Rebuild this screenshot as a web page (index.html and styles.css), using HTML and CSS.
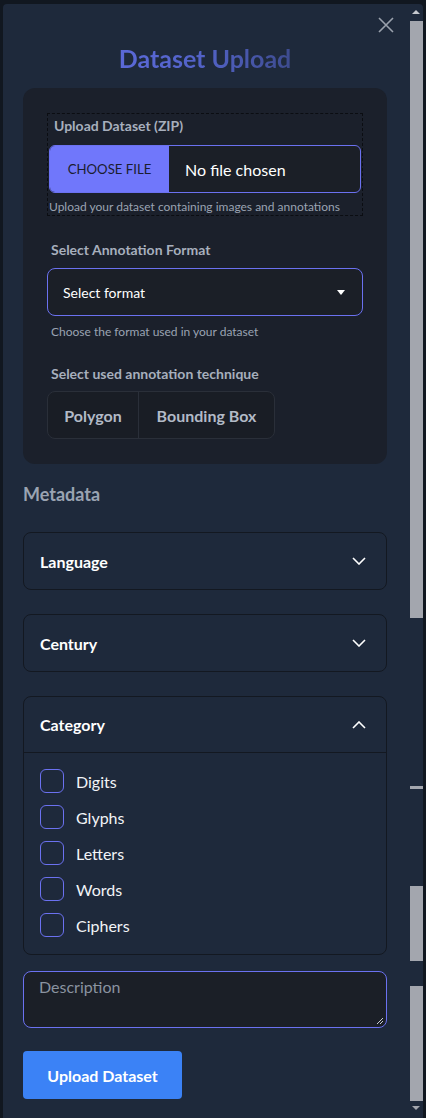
FILE: index.html
```html
<!DOCTYPE html>
<html>
<head>
<meta charset="utf-8">
<link rel="stylesheet" href="styles.css">
</head>
<body>
<div class="modal">
  <div class="content">
    <button class="close" aria-label="Close">
      <svg width="16" height="16" viewBox="0 0 16 16"><path d="M1 1 L15 15 M15 1 L1 15" stroke="#9aa1ad" stroke-width="1.6" fill="none"/></svg>
    </button>
    <h1 class="title">Dataset Upload</h1>
    <div class="card">
      <div class="dropzone">
        <div class="label label-zip">Upload Dataset (ZIP)</div>
        <div class="file">
          <span class="file-btn">CHOOSE FILE</span>
          <span class="file-name">No file chosen</span>
        </div>
        <div class="help help-zip">Upload your dataset containing images and annotations</div>
      </div>
      <div class="label label-format">Select Annotation Format</div>
      <div class="select">
        <span>Select format</span>
        <svg width="8" height="5" viewBox="0 0 8 5"><path d="M0 0 H8 L4 5 Z" fill="#ffffff"/></svg>
      </div>
      <div class="help help-format">Choose the format used in your dataset</div>
      <div class="label label-tech">Select used annotation technique</div>
      <div class="seg">
        <span class="seg-item seg-poly">Polygon</span>
        <span class="seg-item seg-bbox">Bounding Box</span>
      </div>
    </div>
    <h2 class="meta">Metadata</h2>
    <div class="acc">
      <div class="acc-head"><span>Language</span>
        <svg class="chev" width="14" height="8" viewBox="0 0 14 8"><path d="M1 1 L7 7 L13 1" stroke="#fff" stroke-width="1.6" fill="none"/></svg>
      </div>
    </div>
    <div class="acc">
      <div class="acc-head"><span>Century</span>
        <svg class="chev" width="14" height="8" viewBox="0 0 14 8"><path d="M1 1 L7 7 L13 1" stroke="#fff" stroke-width="1.6" fill="none"/></svg>
      </div>
    </div>
    <div class="acc">
      <div class="acc-head acc-open"><span>Category</span>
        <svg class="chev" width="14" height="8" viewBox="0 0 14 8"><path d="M1 7 L7 1 L13 7" stroke="#fff" stroke-width="1.6" fill="none"/></svg>
      </div>
      <div class="acc-body">
        <label class="check"><span class="box"></span>Digits</label>
        <label class="check"><span class="box"></span>Glyphs</label>
        <label class="check"><span class="box"></span>Letters</label>
        <label class="check"><span class="box"></span>Words</label>
        <label class="check"><span class="box"></span>Ciphers</label>
      </div>
    </div>
    <div class="textarea">
      <span class="placeholder">Description</span>
      <svg class="grip" width="8" height="8" viewBox="0 0 8 8"><path d="M7 1 L1 7 M7 4 L4 7" stroke="#c8ccd2" stroke-width="1" fill="none"/></svg>
    </div>
    <button class="submit">Upload Dataset</button>
  </div>
  <div class="scrollbar">
    <span class="arrow-up"></span>
    <span class="thumb t1"></span>
    <span class="thumb t2"></span>
    <span class="thumb t3"></span>
    <span class="thumb t4"></span>
    <span class="arrow-down"></span>
  </div>
</div>
</body>
</html>
```
FILE: styles.css
```css
* { box-sizing: border-box; }
html, body { margin: 0; padding: 0; }
body {
  background: #111720;
  font-family: Lato, "Noto Sans", sans-serif;
  color: #fff;
  width: 426px;
  height: 1118px;
  overflow: hidden;
}
.modal {
  margin: 4px 3px 0 3px;
  height: 1114px;
  background: #1e293b;
  border-radius: 4px 4px 0 0;
  display: flex;
  position: relative;
}
.content {
  flex: 1;
  padding: 0 20px;
  display: flex;
  flex-direction: column;
  white-space: nowrap;
}
.close {
  position: absolute;
  top: 13px;
  right: 29px;
  background: none;
  border: 0;
  padding: 0;
  width: 16px;
  height: 16px;
}
.title {
  margin: 38px 0 0 0;
  height: 32px;
  line-height: 32px;
  font-size: 25px;
  font-weight: 700;
  text-align: center;
  background: linear-gradient(90deg, #5b69d8 0%, #5262c6 50%, #3d4b8e 100%);
  -webkit-background-clip: text;
  background-clip: text;
  color: transparent;
  align-self: center;
  padding: 0 1px;
}
.card {
  margin-top: 14px;
  background: #1b202b;
  border-radius: 12px;
  padding: 25px 24px 25px 24px;
  display: flex;
  flex-direction: column;
}
.dropzone {
  border: 1px dashed #0b0d12;
  padding: 3px 1px 1px 1px;
  display: flex;
  flex-direction: column;
}
.label {
  font-size: 14px;
  font-weight: 700;
  color: #a7afbd;
  line-height: 18px;
  padding-left: 4px;
}
.label-zip { padding-left: 5px; }
.file {
  margin-top: 10px;
  height: 48px;
  border: 1px solid #6b71f0;
  border-radius: 6px;
  display: flex;
  align-items: stretch;
  overflow: hidden;
  background: #1b1f27;
}
.file-btn {
  width: 119px;
  background: #7077fb;
  color: #1b1d2e;
  font-size: 13.2px;
  display: flex;
  align-items: center;
  justify-content: center;
}
.file-name {
  padding-left: 16px;
  font-size: 16px;
  display: flex;
  align-items: center;
  color: #fff;
}
.help {
  font-size: 12px;
  color: #9aa3b2;
  line-height: 16px;
}
.help-zip { margin-top: 7px; line-height: 14px; }
.label-format { margin-top: 25px; }
.select {
  margin-top: 9px;
  height: 48px;
  border: 1px solid #6b71f0;
  border-radius: 8px;
  background: #1b1f27;
  display: flex;
  align-items: center;
  justify-content: space-between;
  padding: 0 17px 0 15px;
  font-size: 14px;
  color: #fff;
}
.help-format { margin-top: 8px; padding-left: 4px; }
.label-tech { margin-top: 25px; }
.seg {
  margin-top: 8px;
  align-self: flex-start;
  height: 48px;
  display: flex;
  border: 1px solid #2a2f39;
  border-radius: 8px;
  overflow: hidden;
  background: #191d25;
}
.seg-item {
  display: flex;
  align-items: center;
  justify-content: center;
  font-size: 16px;
  font-weight: 700;
  color: #b2bac7;
}
.seg-poly { width: 91px; border-right: 1px solid #2a2f39; }
.seg-bbox { width: 135px; }
.meta {
  margin: 19px 0 0 0;
  font-size: 18px;
  font-weight: 700;
  color: #9aa3b2;
  line-height: 22px;
}
.acc {
  border: 1px solid #131821;
  border-radius: 8px;
  margin-top: 24px;
}
.meta + .acc { margin-top: 27px; }
.acc-head {
  height: 56px;
  display: flex;
  align-items: center;
  justify-content: space-between;
  padding: 0 20px 0 16px;
  font-size: 16px;
  font-weight: 700;
  color: #fff;
}
.acc-open { border-bottom: 1px solid #131821; }
.acc-body {
  padding: 17px 16px 18px 16px;
  display: flex;
  flex-direction: column;
  gap: 14px;
}
.check {
  display: flex;
  align-items: center;
  height: 22px;
  font-size: 16px;
  color: #f2f4f7;
}
.box {
  width: 24px;
  height: 24px;
  border: 1.5px solid #6b71f0;
  border-radius: 6px;
  margin-right: 12px;
  flex: none;
}
.textarea {
  margin-top: 16px;
  height: 57px;
  border: 1px solid #6b71f0;
  border-radius: 8px;
  background: #1b1f27;
  position: relative;
  padding: 4px 15px;
}
.placeholder {
  font-size: 16px;
  color: #8a93a0;
  line-height: 22px;
}
.grip {
  position: absolute;
  right: 2px;
  bottom: 2px;
}
.submit {
  margin-top: 23px;
  align-self: flex-start;
  width: 159px;
  height: 48px;
  background: #3b82f6;
  border: 0;
  border-radius: 4px;
  color: #fff;
  font-family: inherit;
  font-size: 16px;
  font-weight: 700;
}
.scrollbar {
  width: 16px;
  flex: none;
  position: relative;
}
.thumb {
  position: absolute;
  left: 3px;
  width: 13px;
  background: #a3a6ae;
}
.t1 { top: 17px; height: 597px; }
.t2 { top: 782px; height: 3px; }
.t3 { top: 882px; height: 75px; }
.t4 { top: 982px; height: 115px; }
.arrow-up, .arrow-down {
  position: absolute;
  left: 5px;
  width: 0;
  height: 0;
  border-left: 4px solid transparent;
  border-right: 4px solid transparent;
}
.arrow-up { top: 6px; border-bottom: 4px solid #c5c8ce; }
.arrow-down { top: 1102px; border-top: 4px solid #a3a6ae; }
```
